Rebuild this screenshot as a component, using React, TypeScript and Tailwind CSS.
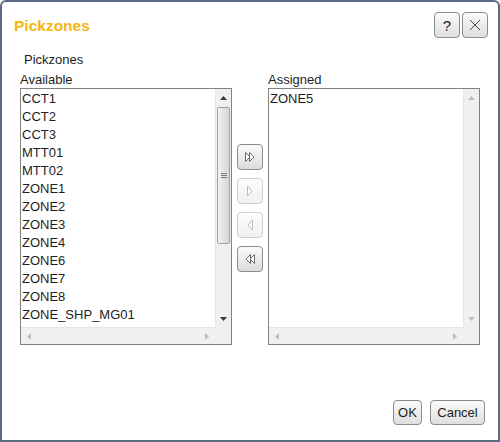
import React from 'react';

const available = [
  'CCT1',
  'CCT2',
  'CCT3',
  'MTT01',
  'MTT02',
  'ZONE1',
  'ZONE2',
  'ZONE3',
  'ZONE4',
  'ZONE6',
  'ZONE7',
  'ZONE8',
  'ZONE_SHP_MG01',
];

const assigned = ['ZONE5'];

const Arrow = ({ dir, color }: { dir: 'up' | 'down' | 'left' | 'right'; color: string }) => {
  const pts = {
    up: '0,4 3.5,0 7,4',
    down: '0,0 7,0 3.5,4',
    left: '4,0 4,7 0,3.5',
    right: '0,0 0,7 4,3.5',
  }[dir];
  const vert = dir === 'up' || dir === 'down';
  return (
    <svg width={vert ? 7 : 4} height={vert ? 4 : 7} viewBox={vert ? '0 0 7 4' : '0 0 4 7'}>
      <polygon points={pts} fill={color} />
    </svg>
  );
};

const VScroll = ({ active }: { active: boolean }) => {
  const c = active ? '#3a3a3a' : '#bdbdbd';
  return (
    <div className="w-[16px] flex flex-col bg-[#f0f0f0] border-l border-[#e6e6e6]">
      <div className="h-[17px] flex items-center justify-center">
        <Arrow dir="up" color={c} />
      </div>
      <div className="flex-1 flex flex-col">
        {active && (
          <div className="mt-[1px] h-[137px] mx-[1px] rounded-[2px] border border-[#a3a3a3] bg-gradient-to-r from-[#f2f2f2] to-[#d6d6d6] flex items-center justify-center">
            <div className="flex flex-col gap-[1px]">
              <div className="w-[6px] h-[1px] bg-[#7a7a7a]" />
              <div className="w-[6px] h-[1px] bg-[#7a7a7a]" />
              <div className="w-[6px] h-[1px] bg-[#7a7a7a]" />
            </div>
          </div>
        )}
      </div>
      <div className="h-[17px] flex items-center justify-center">
        <Arrow dir="down" color={c} />
      </div>
    </div>
  );
};

const HScroll = () => (
  <div className="flex-1 flex items-center justify-between px-[6px] bg-[#f0f0f0] border-t border-[#e6e6e6]">
    <Arrow dir="left" color="#bdbdbd" />
    <Arrow dir="right" color="#bdbdbd" />
  </div>
);

const ListBox = ({ items, active }: { items: string[]; active: boolean }) => (
  <div className="w-[212px] h-[257px] border border-[#828282] flex flex-col bg-white">
    <div className="flex flex-1 min-h-0">
      <div className="flex-1 overflow-hidden pt-[1px]">
        {items.map((item) => (
          <div key={item} className="h-[18px] leading-[18px] pl-[1px] text-[13px] text-[#1e1e1e] whitespace-nowrap">
            {item}
          </div>
        ))}
      </div>
      <VScroll active={active} />
    </div>
    <div className="flex h-[17px]">
      <HScroll />
      <div className="w-[16px] bg-[#f0f0f0]" />
    </div>
  </div>
);

const MoveButton = ({ kind, enabled }: { kind: 'allRight' | 'right' | 'left' | 'allLeft'; enabled: boolean }) => {
  const stroke = enabled ? '#6a6a6a' : '#bcbcbc';
  let shapes: string[] = [];
  if (kind === 'allRight') shapes = ['1.5,1.5 1.5,10.5 6,6', '5.5,1.5 5.5,10.5 10,6'];
  if (kind === 'right') shapes = ['3.5,1 3.5,11 8,6'];
  if (kind === 'left') shapes = ['8.5,1 8.5,11 4,6'];
  if (kind === 'allLeft') shapes = ['10.5,1.5 10.5,10.5 6,6', '6.5,1.5 6.5,10.5 2,6'];
  return (
    <div
      className={`w-[26px] h-[26px] rounded-[4px] border flex items-center justify-center bg-gradient-to-b ${
        enabled ? 'border-[#8c8c8c] from-[#fbfbfb] to-[#dcdcdc]' : 'border-[#cfcfcf] from-[#fdfdfd] to-[#f0f0f0]'
      }`}
    >
      <svg width="12" height="12" viewBox="0 0 12 12">
        {shapes.map((p) => (
          <polygon key={p} points={p} fill="white" stroke={stroke} strokeWidth="1" />
        ))}
      </svg>
    </div>
  );
};

const HeadButton = ({ children }: { children: React.ReactNode }) => (
  <div className="w-[26px] h-[26px] rounded-[4px] border border-[#8c8c8c] bg-gradient-to-b from-[#fbfbfb] to-[#dedede] flex items-center justify-center">
    {children}
  </div>
);

const App = () => {
  return (
    <div className="w-[500px] h-[442px] bg-white border-2 border-[#5d6a85] rounded-t-[6px] flex flex-col font-['Liberation_Sans',Arial,sans-serif]">
      <div className="flex items-center justify-between pt-[10px] pl-[12px] pr-[10px]">
        <span className="text-[15.5px] font-bold text-[#f6b514] mt-[2px]">Pickzones</span>
        <div className="flex gap-[2px]">
          <HeadButton>
            <span className="text-[15px] text-[#222] leading-none">?</span>
          </HeadButton>
          <HeadButton>
            <svg width="12" height="12" viewBox="0 0 12 12">
              <path d="M1 1 L11 11 M11 1 L1 11" stroke="#444" strokeWidth="1" />
            </svg>
          </HeadButton>
        </div>
      </div>

      <div className="pl-[22px] mt-[14px] text-[13px] leading-[16px] text-[#1e1e1e]">Pickzones</div>

      <div className="flex pl-[18px] mt-[4px]">
        <div className="flex flex-col">
          <div className="text-[13px] leading-[16px] text-[#1e1e1e]">Available</div>
          <ListBox items={available} active />
        </div>
        <div className="flex flex-col gap-[8px] mx-[5px] pt-[72px]">
          <MoveButton kind="allRight" enabled />
          <MoveButton kind="right" enabled={false} />
          <MoveButton kind="left" enabled={false} />
          <MoveButton kind="allLeft" enabled />
        </div>
        <div className="flex flex-col">
          <div className="text-[13px] leading-[16px] text-[#1e1e1e]">Assigned</div>
          <ListBox items={assigned} active={false} />
        </div>
      </div>

      <div className="mt-auto flex justify-end gap-[8px] pr-[13px] pb-[15px]">
        <button className="w-[29px] h-[25px] rounded-[4px] border border-[#8c8c8c] bg-gradient-to-b from-[#fbfbfb] to-[#dedede] text-[13px] text-[#1e1e1e]">
          OK
        </button>
        <button className="w-[55px] h-[25px] rounded-[4px] border border-[#8c8c8c] bg-gradient-to-b from-[#fbfbfb] to-[#dedede] text-[13px] text-[#1e1e1e]">
          Cancel
        </button>
      </div>
    </div>
  );
};

export default App;
